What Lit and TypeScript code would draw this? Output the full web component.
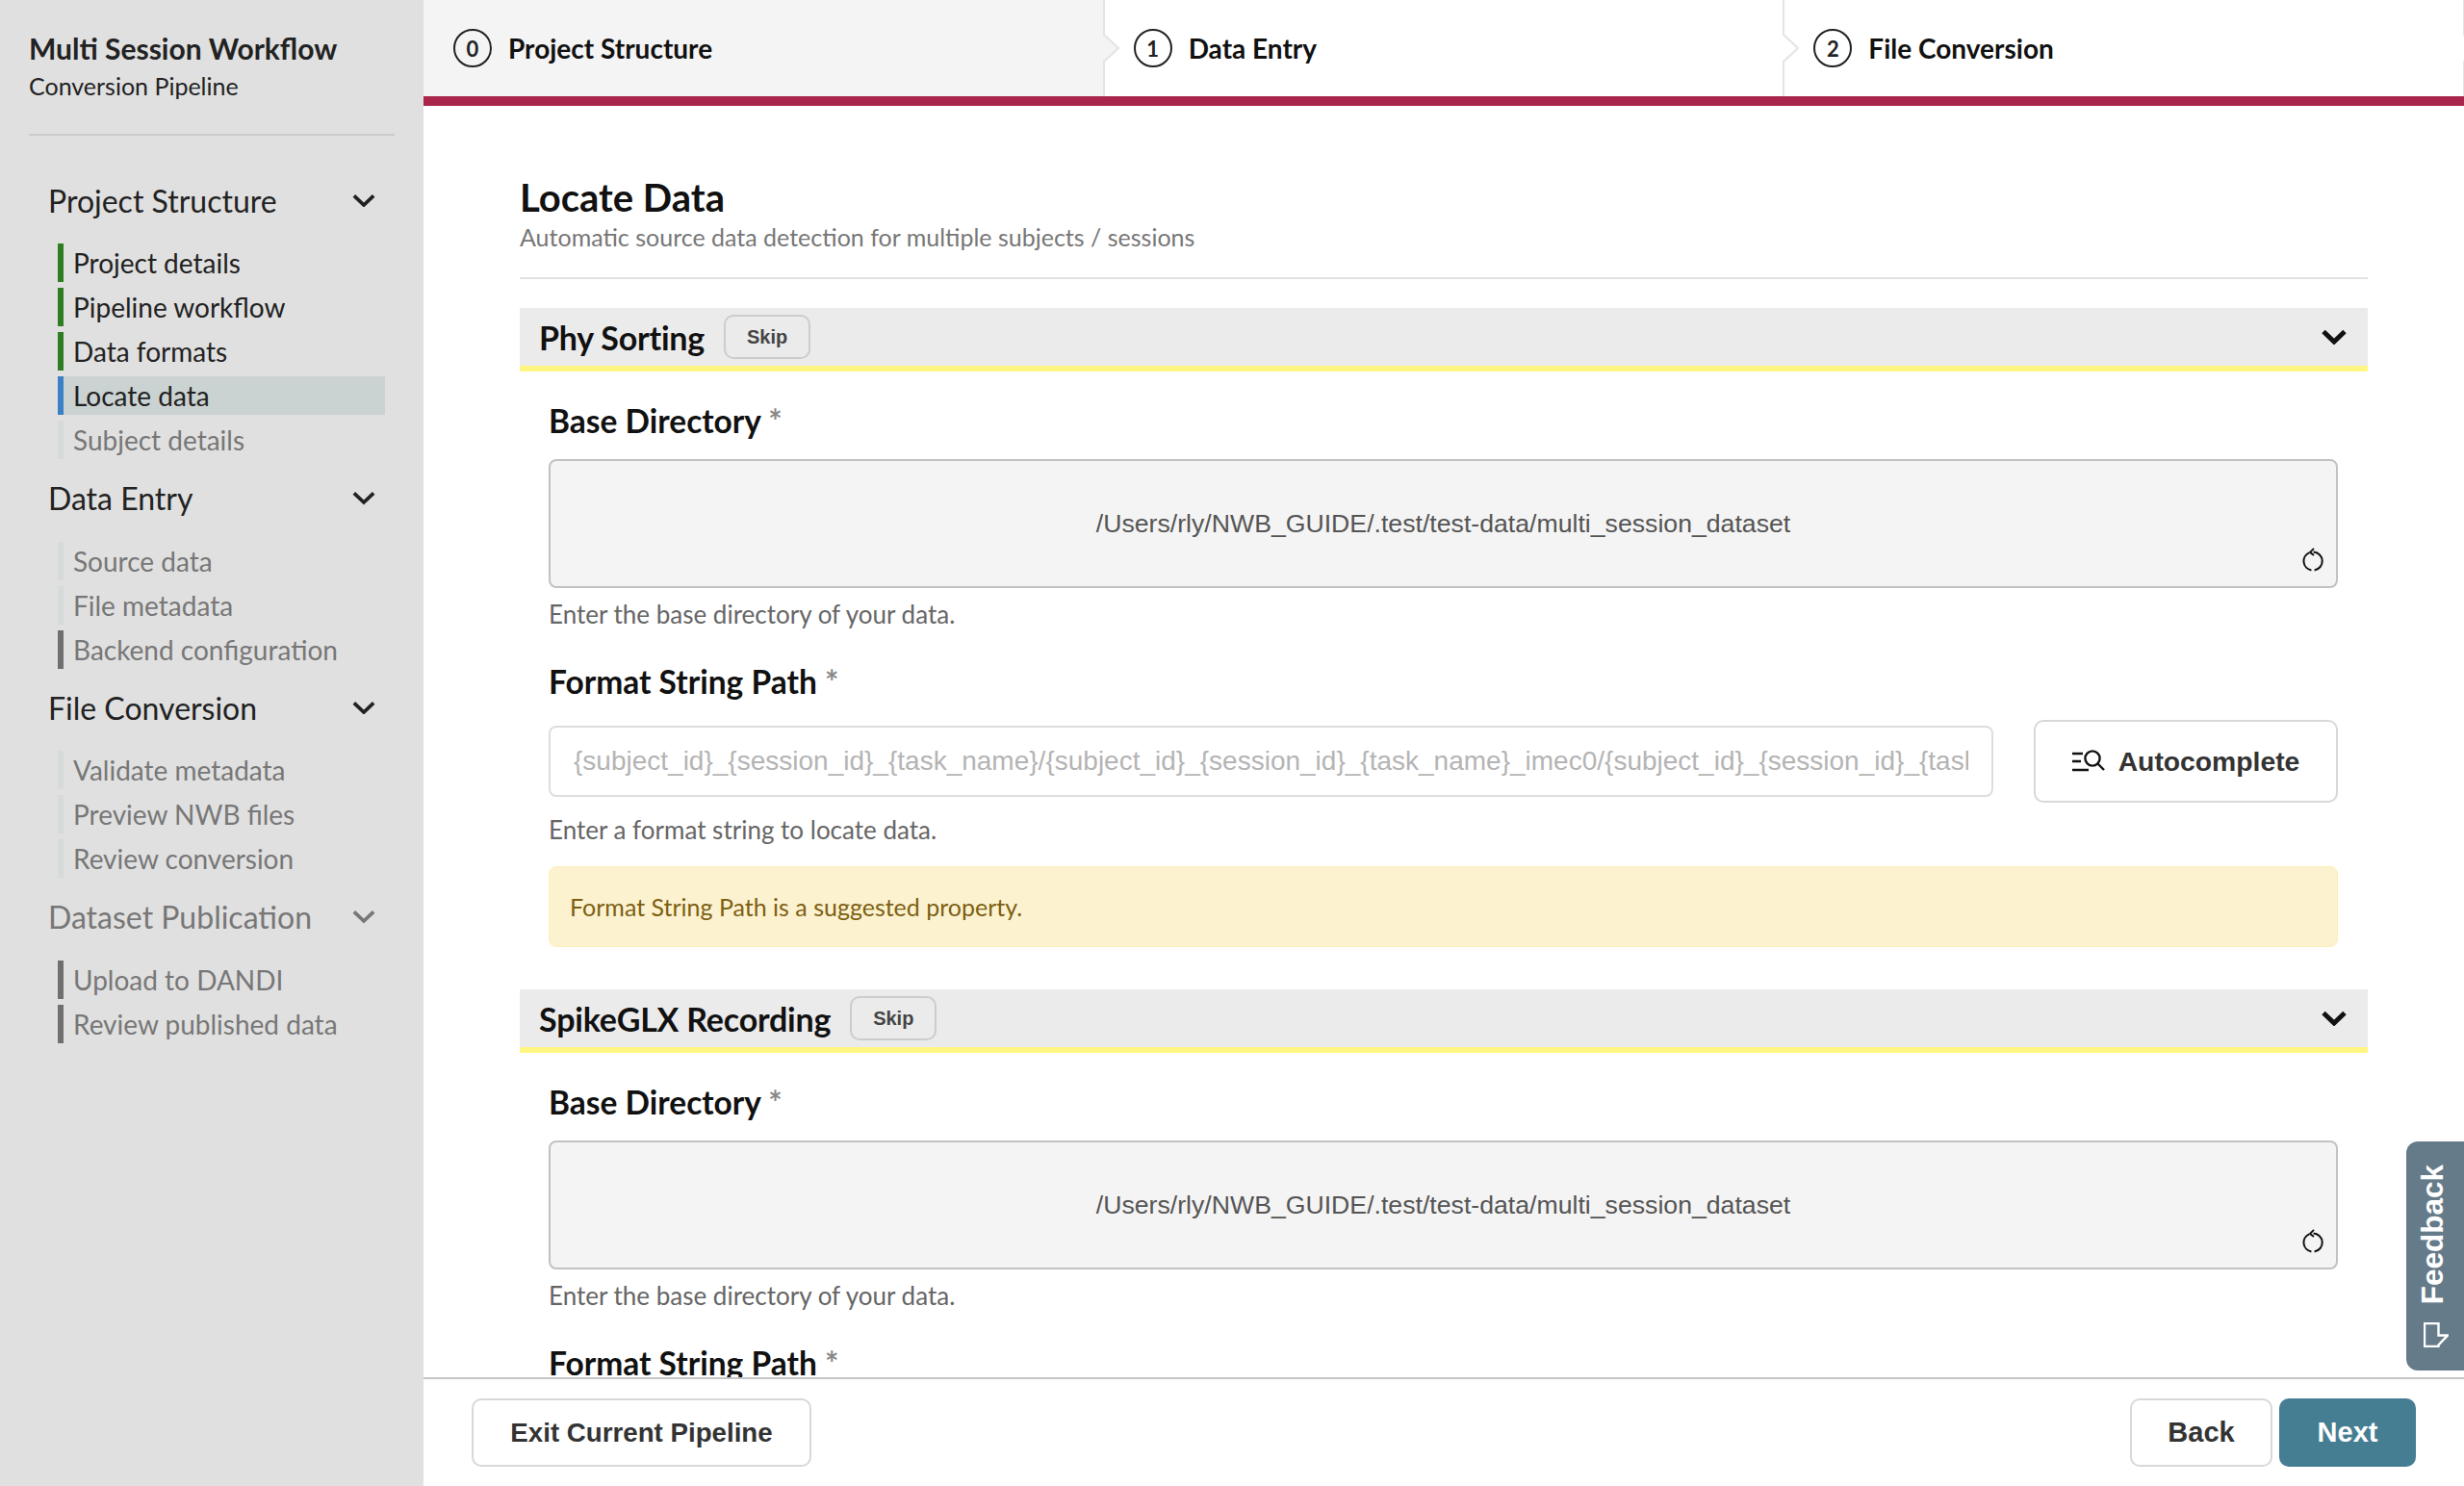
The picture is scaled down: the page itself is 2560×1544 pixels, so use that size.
import { LitElement, html, css, svg } from 'lit';
import { customElement } from 'lit/decorators.js';
import { classMap } from 'lit/directives/class-map.js';

type NavItem = { label: string; bar: 'done' | 'current' | 'light' | 'dark' };
type NavGroup = { title: string; muted?: boolean; items: NavItem[] };

const NAV: NavGroup[] = [
  {
    title: 'Project Structure',
    items: [
      { label: 'Project details', bar: 'done' },
      { label: 'Pipeline workflow', bar: 'done' },
      { label: 'Data formats', bar: 'done' },
      { label: 'Locate data', bar: 'current' },
      { label: 'Subject details', bar: 'light' },
    ],
  },
  {
    title: 'Data Entry',
    items: [
      { label: 'Source data', bar: 'light' },
      { label: 'File metadata', bar: 'light' },
      { label: 'Backend configuration', bar: 'dark' },
    ],
  },
  {
    title: 'File Conversion',
    items: [
      { label: 'Validate metadata', bar: 'light' },
      { label: 'Preview NWB files', bar: 'light' },
      { label: 'Review conversion', bar: 'light' },
    ],
  },
  {
    title: 'Dataset Publication',
    muted: true,
    items: [
      { label: 'Upload to DANDI', bar: 'dark' },
      { label: 'Review published data', bar: 'dark' },
    ],
  },
];

const STEPS = ['Project Structure', 'Data Entry', 'File Conversion'];
const FORMAT_PLACEHOLDER =
  '{subject_id}_{session_id}_{task_name}/{subject_id}_{session_id}_{task_name}_imec0/{subject_id}_{session_id}_{task_name}_imec0.ap.bin';
const BASE_DIR = '/Users/rly/NWB_GUIDE/.test/test-data/multi_session_dataset';

const chevron = (w: number, sw: number) => html`
  <svg width=${w} height=${w * 0.62} viewBox="0 0 26 16" fill="none" stroke="currentColor" stroke-width=${sw}>
    <path d="M2 2.5 L13 13 L24 2.5"></path>
  </svg>
`;

const resetIcon = svg`
  <svg class="reset" width="24" height="26" viewBox="0 0 24 26" fill="none" stroke="#111" stroke-width="2">
    <path d="M8.2 6.3 A9.5 9.5 0 0 0 10.4 24.4"></path>
    <path d="M13.6 24.4 A9.5 9.5 0 0 0 12.5 5.5"></path>
    <path d="M13 1.8 L9 5.8 L13 9" stroke-width="1.9"></path>
  </svg>
`;

@customElement('app-root')
export class AppRoot extends LitElement {
  static styles = css`
    :host {
      display: flex;
      position: relative;
      height: 100vh;
      overflow: hidden;
      font-family: Lato, 'Liberation Sans', sans-serif;
      color: #111;
      background: #fff;
    }

    /* sidebar */
    .sidebar {
      flex: 0 0 440px;
      box-sizing: border-box;
      padding: 30px 30px 0;
      background: #e0e0e0;
    }
    .brand {
      padding-bottom: 31px;
      border-bottom: 2px solid #cbcbcb;
      margin-bottom: 47px;
    }
    .brand h1 {
      margin: 0;
      font-size: 30px;
      line-height: 40px;
      font-weight: 700;
      color: #222;
    }
    .brand p {
      margin: 0;
      font-size: 25px;
      line-height: 38px;
      color: #222;
    }
    .group {
      margin-bottom: 20.5px;
    }
    .group-head {
      display: flex;
      justify-content: space-between;
      align-items: center;
      height: 40px;
      padding: 0 20px 0 20px;
      margin-bottom: 25px;
      font-size: 32px;
      color: #222;
    }
    .group-head.muted {
      color: #777;
    }
    .group-head svg {
      color: #222;
    }
    .group-head.muted svg {
      color: #777;
    }
    .items {
      display: flex;
      flex-direction: column;
      gap: 6px;
      margin: 0 10px 0 30px;
    }
    .item {
      height: 40px;
      box-sizing: border-box;
      padding-left: 10px;
      border-left: 6px solid #d6dada;
      font-size: 28px;
      line-height: 40px;
      color: #777;
    }
    .item.done {
      border-left-color: #2f7d22;
      color: #222;
    }
    .item.current {
      border-left-color: #3b7fc4;
      background: #cbd2d2;
      color: #222;
    }
    .item.dark {
      border-left-color: #6f6f6f;
    }

    /* main column */
    .main {
      flex: 1;
      min-width: 0;
      display: flex;
      flex-direction: column;
    }
    .steps {
      flex: 0 0 100px;
      display: flex;
      border-bottom: 10px solid #a9264b;
      position: relative;
    }
    .step {
      flex: 1;
      position: relative;
      display: flex;
      align-items: center;
      gap: 17px;
      padding-left: 31px;
      font-size: 28px;
      font-weight: 700;
      color: #111;
    }
    .step.active {
      background: #f4f4f4;
    }
    .num {
      width: 36px;
      height: 36px;
      border: 2px solid #222;
      border-radius: 50%;
      display: flex;
      align-items: center;
      justify-content: center;
      font-size: 22px;
      font-weight: 700;
      color: #222;
    }
    .step-edge {
      position: absolute;
      top: 0;
      left: calc(100% - 1px);
      z-index: 1;
    }

    .content {
      flex: 1;
      min-height: 0;
      overflow: hidden;
      padding: 71px 100px 0;
    }
    .page-title {
      margin: 0;
      font-size: 40px;
      line-height: 48px;
      font-weight: 700;
    }
    .page-sub {
      margin: 2px 0 0;
      font-size: 25px;
      line-height: 30px;
      color: #777;
    }
    .rule {
      height: 2px;
      background: #e2e2e2;
      margin: 27px 0 30px;
    }

    .acc-head {
      display: flex;
      align-items: center;
      height: 60px;
      padding: 0 22px 0 20px;
      background: #ebebeb;
      border-bottom: 6px solid #fff682;
    }
    .acc-head h2 {
      margin: 0;
      font-size: 34px;
      font-weight: 700;
      letter-spacing: -0.2px;
    }
    .skip {
      margin-left: 20px;
      width: 90px;
      height: 46px;
      box-sizing: border-box;
      border: 2px solid #ccc;
      border-radius: 10px;
      background: transparent;
      font: bold 20px 'Liberation Sans', sans-serif;
      color: #444;
      padding: 0;
    }
    .acc-head svg {
      margin-left: auto;
    }
    .acc-body {
      padding: 31px 31px 44px 30px;
    }
    .label {
      font-size: 33.5px;
      line-height: 40px;
      font-weight: 700;
    }
    .label span {
      font-size: 34px;
      line-height: 0;
      font-weight: 700;
      color: #888;
    }
    .dir {
      position: relative;
      height: 134px;
      box-sizing: border-box;
      margin-top: 20px;
      border: 2px solid #c2c2c2;
      border-radius: 8px;
      background: #f4f4f4;
      display: flex;
      align-items: center;
      justify-content: center;
      font: 26.67px 'Liberation Sans', sans-serif;
      color: #555;
    }
    .reset {
      position: absolute;
      right: 12px;
      bottom: 15px;
    }
    .help {
      margin-top: 12px;
      font-size: 26px;
      line-height: 30px;
      color: #666;
    }
    .label.next {
      margin-top: 35px;
    }
    .row {
      display: flex;
      align-items: center;
      gap: 42px;
      margin-top: 20px;
    }
    .row input {
      flex: 1;
      min-width: 0;
      height: 74px;
      box-sizing: border-box;
      padding: 0 24px;
      border: 2px solid #ddd;
      border-radius: 8px;
      font: 28px 'Liberation Sans', sans-serif;
      outline: none;
    }
    .row input::placeholder {
      color: #b4b4b4;
      opacity: 1;
    }
    .btn {
      box-sizing: border-box;
      border: 2px solid #d8d8d8;
      border-radius: 10px;
      background: #fff;
      font: bold 29px 'Liberation Sans', sans-serif;
      color: #333;
      padding: 0;
    }
    .btn.auto {
      flex: 0 0 316px;
      height: 86px;
      display: flex;
      align-items: center;
      justify-content: center;
      gap: 14px;
      font-size: 28.3px;
    }
    .row + .help {
      margin-top: 13px;
    }
    .warn {
      margin-top: 23px;
      height: 84px;
      box-sizing: border-box;
      padding-left: 21px;
      display: flex;
      align-items: center;
      border: 1px solid #ffeeba;
      border-radius: 8px;
      background: #fcf2cf;
      font-size: 25px;
      color: #7d5f13;
    }

    .footer {
      flex: 0 0 111px;
      display: flex;
      align-items: center;
      gap: 7px;
      padding: 0 50px;
      border-top: 2px solid #c6c6c6;
      background: #fff;
    }
    .footer .btn {
      height: 71px;
    }
    .btn.exit {
      width: 353px;
      margin-right: auto;
      font-size: 27.7px;
    }
    .back {
      width: 148px;
    }
    .btn.primary {
      width: 142px;
      border-color: #457e92;
      background: #457e92;
      color: #fff;
    }

    /* tab stuck to the window edge, over the page */
    .feedback {
      position: absolute;
      right: 0;
      top: 1186px;
      width: 60px;
      height: 238px;
      box-sizing: border-box;
      padding: 24px 4px 0 0;
      border-radius: 12px 0 0 12px;
      background: #667b8a;
      display: flex;
      flex-direction: column;
      align-items: center;
      gap: 19px;
      color: #fff;
    }
    .feedback span {
      writing-mode: vertical-rl;
      transform: rotate(180deg);
      font: bold 31.5px/1 'Liberation Sans', sans-serif;
    }
    .feedback svg {
      margin-left: 5px;
    }
  `;

  renderGroup(group: NavGroup) {
    return html`
      <div class="group">
        <div class=${classMap({ 'group-head': true, muted: !!group.muted })}>
          <span>${group.title}</span>
          ${chevron(24, 4)}
        </div>
        <div class="items">
          ${group.items.map((i) => html`<div class="item ${i.bar}">${i.label}</div>`)}
        </div>
      </div>
    `;
  }

  renderStep(label: string, index: number) {
    const active = index === 0;
    return html`
      <div class=${classMap({ step: true, active })}>
        <span class="num">${index}</span>
        <span>${label}</span>
        <svg class="step-edge" width="18" height="100" viewBox="0 0 18 100">
          <path d="M1 0 V36 L16 50 L1 64 V100" fill=${active ? '#f4f4f4' : '#fff'} stroke="#e4e4e4" stroke-width="2"></path>
        </svg>
      </div>
    `;
  }

  renderInterface(name: string) {
    return html`
      <section>
        <div class="acc-head">
          <h2>${name}</h2>
          <button class="skip">Skip</button>
          ${chevron(26, 5)}
        </div>
        <div class="acc-body">
          <div class="label">Base Directory <span>*</span></div>
          <div class="dir">${BASE_DIR} ${resetIcon}</div>
          <div class="help">Enter the base directory of your data.</div>
          <div class="label next">Format String Path <span>*</span></div>
          <div class="row">
            <input placeholder=${FORMAT_PLACEHOLDER} />
            <button class="btn auto">
              <svg width="34" height="24" viewBox="0 0 34 24" fill="none" stroke="#111" stroke-width="2.4">
                <path d="M0 4 H11 M0 12 H9 M0 21 H17"></path>
                <circle cx="21" cy="9" r="7.6"></circle>
                <path d="M26.5 14.5 L33 21"></path>
              </svg>
              Autocomplete
            </button>
          </div>
          <div class="help">Enter a format string to locate data.</div>
          <div class="warn">Format String Path is a suggested property.</div>
        </div>
      </section>
    `;
  }

  render() {
    return html`
      <aside class="sidebar">
        <div class="brand">
          <h1>Multi Session Workflow</h1>
          <p>Conversion Pipeline</p>
        </div>
        ${NAV.map((g) => this.renderGroup(g))}
      </aside>
      <div class="main">
        <div class="steps">${STEPS.map((s, i) => this.renderStep(s, i))}</div>
        <div class="content">
          <h1 class="page-title">Locate Data</h1>
          <p class="page-sub">Automatic source data detection for multiple subjects / sessions</p>
          <div class="rule"></div>
          ${this.renderInterface('Phy Sorting')}
          ${this.renderInterface('SpikeGLX Recording')}
        </div>
        <div class="footer">
          <button class="btn exit">Exit Current Pipeline</button>
          <button class="btn back">Back</button>
          <button class="btn primary">Next</button>
        </div>
      </div>
      <div class="feedback">
        <span>Feedback</span>
        <svg width="26" height="26" viewBox="0 0 26 26" fill="none" stroke="#fff" stroke-width="2.4">
          <path d="M1 1 H15.5 V13.5 H25 L15.5 23.5 V25 H1 Z"></path>
        </svg>
      </div>
    `;
  }
}
